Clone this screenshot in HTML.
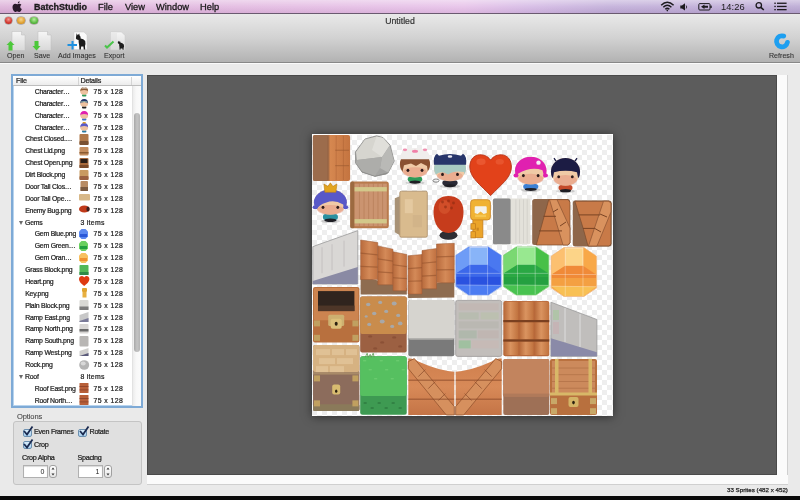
<!DOCTYPE html>
<html><head><meta charset="utf-8">
<style>
*{margin:0;padding:0;box-sizing:border-box}
html,body{width:800px;height:500px;overflow:hidden;background:#eaeaea;font-family:"Liberation Sans",sans-serif;color:#222}
.abs{position:absolute}
#wrap{position:absolute;left:0;top:0;width:800px;height:500px;will-change:transform}
#menubar{left:0;top:0;width:800px;height:14px;background:linear-gradient(rgba(255,255,255,0.45),rgba(255,255,255,0.12) 50%,rgba(60,20,60,0.06)),linear-gradient(to right,#dcb0d8 0%,#e2b8e0 30%,#e6c0e8 58%,#d4b8e4 66%,#c0acd8 76%,#b8a6d2 100%);border-bottom:1px solid #6a5a70}
#menubar span{-webkit-text-stroke:0.3px #1a1a1a}
#menubar span{position:absolute;top:1px;font-size:9.3px;line-height:12px;color:#1a1a1a}
#toolbar{left:0;top:14px;width:800px;height:49px;background:linear-gradient(#e9e9e9,#d2d2d2 50%,#b2b2b2);border-bottom:1px solid #888}
#content{left:0;top:63px;width:800px;height:433px;background:#eaeaea;border-top:1px solid #fafafa}
#black{left:0;top:496px;width:800px;height:4px;background:#0a0a0a}
.light{position:absolute;width:7.6px;height:7.6px;border-radius:50%;box-shadow:0 0 0 0.6px rgba(90,60,60,0.55)}
.tl{position:absolute;font-size:7.1px;line-height:8px;color:#333;-webkit-text-stroke:0.1px #333}
#table{left:11px;top:74px;width:132px;height:334px;background:#fff;border:2px solid #7eaad6;box-shadow:inset 0 0 0 1px #b8d4ee;overflow:hidden}
#thead{left:0;top:0;width:128px;height:10px;background:linear-gradient(#fff,#ececec);border-bottom:1px solid #bdbdbd}
#thead span{position:absolute;top:0;font-size:7.2px;line-height:9px;color:#222;letter-spacing:-0.2px;-webkit-text-stroke:0.22px #222}
.row{position:absolute;left:0;height:12px;width:120px;font-size:6.9px;line-height:12px;color:#1e1e1e;white-space:nowrap;-webkit-text-stroke:0.22px #1e1e1e}
.row .n{letter-spacing:-0.22px}
.row .n{position:absolute;top:0}
.row .d{position:absolute;left:80.4px;top:0;letter-spacing:0.42px}
.row .ic{position:absolute;left:66px;top:0.5px;width:11px;height:11px}
.row .ic svg{display:block}
.tri{position:absolute;width:0;height:0;border-left:2.8px solid transparent;border-right:2.8px solid transparent;border-top:4.6px solid #6a6a6a}
#canvas{left:147px;top:75px;width:630px;height:400px;background:#5c5c5c;border:1px solid #4a4a4a}
#vscroll{left:777px;top:75px;width:11px;height:410px;background:#fbfbfb;border-right:1px solid #d0d0d0}
#hscroll{left:147px;top:475px;width:641px;height:10px;background:#fbfbfb;border-bottom:1px solid #d0d0d0}
#sheet{left:312px;top:134px;width:301px;height:282px;background-color:#fff;overflow:hidden;box-shadow:0 1px 9px rgba(0,0,0,0.5)}
#checker{left:0;top:1px;width:301px;height:281px;filter:blur(0.5px);
 background-image:linear-gradient(45deg,#eeeeee 25%,transparent 25%,transparent 75%,#eeeeee 75%),linear-gradient(45deg,#eeeeee 25%,transparent 25%,transparent 75%,#eeeeee 75%);
 background-size:10px 10px;background-position:0 0,5px 5px}
#options{left:13px;top:421px;width:129px;height:64px;background:#e0e0e0;border:1px solid #c4c4c4;border-radius:3px}
.cb{position:absolute;width:9px;height:8px;border-radius:2px;background:linear-gradient(#d8ecfa,#a8d0f0);border:1px solid #6c90b0}
.cbl{position:absolute;font-size:7.2px;line-height:8px;color:#1e1e1e;letter-spacing:-0.3px;-webkit-text-stroke:0.22px #1e1e1e}
.field{position:absolute;height:13px;background:#fff;border:1px solid #b0b0b0;box-shadow:inset 0 1px 1px rgba(0,0,0,0.15);font-size:7px;line-height:12px;text-align:right;padding-right:2px;color:#222}
.step{position:absolute;width:8px;height:13px;background:linear-gradient(#fff,#e6e6e6);border:1px solid #a0a0a0;border-radius:3px}
</style></head><body><div id="wrap">

<div id="menubar" class="abs">
  <svg class="abs" style="left:11.5px;top:0.8px" width="11" height="12" viewBox="0 0 11 12"><path d="M7.6 0.3c0.1 1-0.6 2.2-1.8 2.3C5.7 1.5 6.5 0.4 7.6 0.3z M5.3 3.2c0.8 0 1.3-0.5 2.1-0.5c0.7 0 1.5 0.3 2 1c-1.8 1-1.5 3.5 0.4 4.2c-0.4 1.1-1.4 3-2.5 3c-0.8 0-1-0.5-2-0.5s-1.300 0.5-2 0.5C2.2 11 0.5 8.6 0.5 6.2C0.5 4 1.8 2.8 3.1 2.8C4 2.8 4.6 3.2 5.3 3.2z" fill="#2a1a2a"/></svg>
  <span style="left:34px;font-weight:bold;font-size:9px">BatchStudio</span>
  <span style="left:98px">File</span>
  <span style="left:125px">View</span>
  <span style="left:156px">Window</span>
  <span style="left:200px">Help</span>
  <span style="left:721px;-webkit-text-stroke:0;letter-spacing:0.1px">14:26</span>
  <svg class="abs" style="left:655px;top:0" width="140" height="14" viewBox="655 0 140 14">
    <path d="M661.2,5.2 Q667.3,-0.8 673.6,5.2" stroke="#1c1a1e" stroke-width="1.5" fill="none"/>
    <path d="M663.3,7.3 Q667.3,3.3 671.4,7.3" stroke="#1c1a1e" stroke-width="1.5" fill="none"/>
    <path d="M665.3,9.3 Q667.3,7.5 669.4,9.3" stroke="#1c1a1e" stroke-width="1.5" fill="none"/>
    <circle cx="667.3" cy="10.6" r="0.8" fill="#1c1a1e"/>
    <path d="M680.3,5.6 H682 L685,3.3 V10.6 L682,8.4 H680.3 Z" fill="#1c1a1e"/>
    <path d="M686.2,5.5 Q687.2,7 686.2,8.5" stroke="#1c1a1e" stroke-width="0.8" fill="none"/>
    <rect x="698.8" y="3.6" width="11.2" height="6.4" rx="1" stroke="#1c1a1e" stroke-width="1" fill="none"/>
    <rect x="710.3" y="5.6" width="1.4" height="2.4" fill="#1c1a1e"/>
    <path d="M701,6.8 L704.5,4.6 V5.8 H708 V7.8 H704.5 V9 Z" fill="#1c1a1e"/>
    <circle cx="758.8" cy="5.3" r="2.7" stroke="#1c1a1e" stroke-width="1.3" fill="none"/>
    <path d="M760.8,7.3 L763.8,10" stroke="#1c1a1e" stroke-width="1.6"/>
    <rect x="774.3" y="2.6" width="1.5" height="1.3" fill="#1c1a1e"/><rect x="777" y="2.6" width="9.6" height="1.3" fill="#1c1a1e"/>
    <rect x="774.3" y="5.8" width="1.5" height="1.3" fill="#1c1a1e"/><rect x="777" y="5.8" width="9.6" height="1.3" fill="#1c1a1e"/>
    <rect x="774.3" y="9" width="1.5" height="1.3" fill="#1c1a1e"/><rect x="777" y="9" width="9.6" height="1.3" fill="#1c1a1e"/>
  </svg>
</div>

<div id="toolbar" class="abs">
  <div class="light" style="left:4.8px;top:2.6px;background:radial-gradient(circle at 50% 35%,#f29a94,#d2352c 60%,#a8241e)"></div>
  <div class="light" style="left:17.4px;top:2.6px;background:radial-gradient(circle at 50% 35%,#f7d890,#e0a030 60%,#b07a20)"></div>
  <div class="light" style="left:30.2px;top:2.6px;background:radial-gradient(circle at 50% 35%,#b8f0a0,#58b840 60%,#3a8a2a)"></div>
  <div class="abs" style="left:0;top:2px;width:800px;text-align:center;font-size:8.7px;line-height:10px;color:#333;-webkit-text-stroke:0.2px #333">Untitled</div>
  
  <svg class="abs" style="left:0;top:0" width="140" height="40" viewBox="0 14 140 40">
    <defs>
      <linearGradient id="doc" x1="0" y1="0" x2="0" y2="1"><stop offset="0" stop-color="#f6f6f6"/><stop offset="1" stop-color="#d8d8d8"/></linearGradient>
    </defs>
    <!-- Open -->
    <path d="M12,31.5 H21.5 L25,35 V50.5 H12 Z" fill="url(#doc)" stroke="#bdbdbd" stroke-width="0.5"/>
    <path d="M21.5,31.5 V35 H25" fill="#d8d8d8" stroke="#bbb" stroke-width="0.5"/>
    <path d="M10.5,41 L14.5,45 H12.5 V50.5 H8.5 V45 H6.5 Z" fill="#4cc83a"/>
    <!-- Save -->
    <path d="M38,31.5 H47.5 L51,35 V50.5 H38 Z" fill="url(#doc)" stroke="#bdbdbd" stroke-width="0.5"/>
    <path d="M47.5,31.5 V35 H51" fill="#d8d8d8" stroke="#bbb" stroke-width="0.5"/>
    <path d="M34.5,41 H38.5 V46 H40.5 L36.5,50.5 L32.5,46 H34.5 Z" fill="#4cc83a"/>
    <!-- Add Images -->
    <path d="M74,32 H84 L87,35 V49.5 H74 Z" fill="#fafafa" stroke="#c8c8c8" stroke-width="0.5"/>
    <path d="M76.6,33.2 L77.8,35.2 L79.2,33.4 L79.6,35.6 Q81,36.4 80.6,38.6 Q83.6,39 85.2,41 Q85.8,43.5 85,46 L85.2,49.5 L83.8,49.5 L83.4,46.6 L81.2,46.6 L80.8,49.5 L79.4,49.5 L79.2,45.5 Q78.4,42 78.6,40 L76.8,39.6 Q75.4,38.6 76,37 Q76.4,35.4 76.6,33.2 Z" fill="#1c1c1c"/>
    <path d="M71.5,41 H73.5 V44 H77 V46 H73.5 V49.5 H71.5 V46 H67.5 V44 H71.5 Z" fill="#1e90e0"/>
    <!-- Export -->
    <path d="M110.5,32 H121.5 L125,35.5 V50 H110.5 Z" fill="url(#doc)" stroke="#c8c8c8" stroke-width="0.5"/>
    <path d="M112,33 V49 M114,33 V49 M116,33 V49" stroke="#dcdcdc" stroke-width="0.8"/>
    <path d="M118.2,40.8 L119,42 L120,41 L120.4,42.6 Q122.6,43 123.8,44.5 Q124.4,46.5 123.6,48 L123.6,49.8 L122.6,49.8 L122.4,48.4 L120.6,48.4 L120.4,49.8 L119.6,49.8 L119.4,46.4 Q119,44.8 119.2,44 L118,43.6 Q117.4,42.6 118.2,40.8 Z" fill="#1c1c1c"/>
    <path d="M105,45.5 L107,47.5 L113.5,41.5" stroke="#4ac44a" stroke-width="2" fill="none"/>
    </svg>
  <svg class="abs" style="left:770px;top:17px" width="24" height="20" viewBox="0 0 24 20">
    <path d="M13.7,5.1 A5.5,5.5 0 1 0 17.4,11.35" stroke="#1e9ff0" stroke-width="4.8" stroke-linecap="round" fill="none"/>
  </svg>
  <div class="tl" style="left:7px;top:38px">Open</div>
  <div class="tl" style="left:34px;top:38px">Save</div>
  <div class="tl" style="left:58px;top:38px">Add Images</div>
  <div class="tl" style="left:104px;top:38px">Export</div>
  <div class="tl" style="left:769px;top:38px">Refresh</div>
</div>

<div id="content" class="abs"></div>
<div id="black" class="abs"></div>

<div id="table" class="abs">
  <div id="thead" class="abs"><span style="left:3px">File</span><span style="left:67.5px">Details</span></div>
  <div class="abs" style="left:65px;top:1px;width:1px;height:8px;background:#d4d4d4"></div>
  <div class="abs" style="left:118px;top:1px;width:1px;height:8px;background:#d4d4d4"></div>
  <div class="abs" style="left:119px;top:10px;width:9px;height:322px;background:linear-gradient(to right,#ececec,#f8f8f8 40%,#fbfbfb);border-left:1px solid #e2e2e2"></div>
  <div class="abs" style="left:121px;top:36.5px;width:5.5px;height:239px;border-radius:3px;background:linear-gradient(to right,#a8a8a8,#c4c4c4 50%,#b4b4b4)"></div>
<div class="row" style="top:9.9px"><span class="n" style="left:21.7px">Character…</span><span class="ic"><svg width="11" height="11" viewBox="0 0 11 11"><rect x="3" y="8.2" width="4.4" height="2.4" rx="1" fill="#2e9a58"/><ellipse cx="5.2" cy="5.4" rx="3.9" ry="3.3" fill="#eec2a0"/><path d="M1.3,5.6 Q1.1,1.2 5.2,1.1 Q9.3,1.2 9.1,5.6 L8.2,4.4 Q5.2,3.4 2.2,4.4 Z" fill="#8a5a34"/><path d="M2,2.6 Q5.2,-0.4 8.4,2.6 Z" fill="#e8e0d8"/></svg></span><span class="d">75 x 128</span></div>
<div class="row" style="top:21.77px"><span class="n" style="left:21.7px">Character…</span><span class="ic"><svg width="11" height="11" viewBox="0 0 11 11"><rect x="3" y="8.2" width="4.4" height="2.4" rx="1" fill="#222"/><ellipse cx="5.2" cy="5.4" rx="3.9" ry="3.3" fill="#eec2a0"/><path d="M1.3,5.6 Q1.1,1.2 5.2,1.1 Q9.3,1.2 9.1,5.6 L8.2,4.4 Q5.2,3.4 2.2,4.4 Z" fill="#24346a"/><path d="M1.6,3.6 Q5.2,2.2 8.8,3.6 L8.6,4.6 Q5.2,3.6 1.8,4.6 Z" fill="#90b0a8"/></svg></span><span class="d">75 x 128</span></div>
<div class="row" style="top:33.65px"><span class="n" style="left:21.7px">Character…</span><span class="ic"><svg width="11" height="11" viewBox="0 0 11 11"><rect x="3" y="8.2" width="4.4" height="2.4" rx="1" fill="#3c70c8"/><ellipse cx="5.2" cy="5.4" rx="3.9" ry="3.3" fill="#eec2a0"/><path d="M1.3,5.6 Q1.1,1.2 5.2,1.1 Q9.3,1.2 9.1,5.6 L8.2,4.4 Q5.2,3.4 2.2,4.4 Z" fill="#e020b0"/></svg></span><span class="d">75 x 128</span></div>
<div class="row" style="top:45.52px"><span class="n" style="left:21.7px">Character…</span><span class="ic"><svg width="11" height="11" viewBox="0 0 11 11"><rect x="3" y="8.2" width="4.4" height="2.4" rx="1" fill="#2a7aa0"/><ellipse cx="5.2" cy="5.4" rx="3.9" ry="3.3" fill="#eec2a0"/><path d="M1.3,5.6 Q1.1,1.2 5.2,1.1 Q9.3,1.2 9.1,5.6 L8.2,4.4 Q5.2,3.4 2.2,4.4 Z" fill="#5a5ac8"/><rect x="3.7" y="0" width="3" height="1.4" rx="0" fill="#e0a020"/></svg></span><span class="d">75 x 128</span></div>
<div class="row" style="top:57.4px"><span class="n" style="left:12.2px">Chest Closed.…</span><span class="ic"><svg width="11" height="11" viewBox="0 0 11 11"><rect x="0.5" y="0" width="9" height="11" rx="1" fill="#b07848"/><rect x="0.5" y="7" width="9" height="4" rx="1" fill="#7a5030"/></svg></span><span class="d">75 x 128</span></div>
<div class="row" style="top:69.28px"><span class="n" style="left:12.2px">Chest Lid.png</span><span class="ic"><svg width="11" height="11" viewBox="0 0 11 11"><rect x="0.5" y="1" width="9" height="8.5" rx="1" fill="#c48c5c"/><rect x="0.5" y="6" width="9" height="1.5" rx="0" fill="#8a5a30"/></svg></span><span class="d">75 x 128</span></div>
<div class="row" style="top:81.15px"><span class="n" style="left:12.2px">Chest Open.png</span><span class="ic"><svg width="11" height="11" viewBox="0 0 11 11"><rect x="0.5" y="0" width="9" height="10" rx="1" fill="#a86a3c"/><rect x="1.5" y="1" width="7" height="4" rx="0" fill="#2a1e18"/><rect x="0.5" y="7" width="9" height="3" rx="0" fill="#7a4a2a"/></svg></span><span class="d">75 x 128</span></div>
<div class="row" style="top:93.03px"><span class="n" style="left:12.2px">Dirt Block.png</span><span class="ic"><svg width="11" height="11" viewBox="0 0 11 11"><rect x="0.5" y="0" width="9" height="10" rx="1" fill="#c89a60"/><rect x="0.5" y="6" width="9" height="4" rx="1" fill="#9a6040"/></svg></span><span class="d">75 x 128</span></div>
<div class="row" style="top:104.9px"><span class="n" style="left:12.2px">Door Tall Clos…</span><span class="ic"><svg width="11" height="11" viewBox="0 0 11 11"><rect x="1.5" y="0" width="7.5" height="10" rx="1" fill="#b88c64"/><rect x="1.5" y="6" width="7.5" height="4" rx="0" fill="#7a5a40"/></svg></span><span class="d">75 x 128</span></div>
<div class="row" style="top:116.78px"><span class="n" style="left:12.2px">Door Tall Ope…</span><span class="ic"><svg width="11" height="11" viewBox="0 0 11 11"><rect x="0" y="1" width="11" height="6.5" rx="1" fill="#d8b888"/></svg></span><span class="d">75 x 128</span></div>
<div class="row" style="top:128.65px"><span class="n" style="left:12.2px">Enemy Bug.png</span><span class="ic"><svg width="11" height="11" viewBox="0 0 11 11"><ellipse cx="5.3" cy="4" rx="5.3" ry="3.6" fill="#c03a1a"/><ellipse cx="9" cy="4" rx="1.6" ry="2.6" fill="#3a2020"/></svg></span><span class="d">75 x 128</span></div>
<div class="row" style="top:140.53px"><span class="tri" style="left:5.6px;top:4px"></span><span class="n" style="left:12px">Gems</span><span class="d" style="left:67.5px;letter-spacing:0.28px">3 items</span></div>
<div class="row" style="top:152.4px"><span class="n" style="left:21.7px">Gem Blue.png</span><span class="ic"><svg width="11" height="11" viewBox="0 0 11 11"><polygon points="2.5,0 6.5,0 9,2.5 9,7.5 6.5,10 2.5,10 0,7.5 0,2.5" fill="#5a88f0"/><rect x="1" y="5" width="7" height="3" rx="0" fill="#2a58d8"/></svg></span><span class="d">75 x 128</span></div>
<div class="row" style="top:164.28px"><span class="n" style="left:21.7px">Gem Green…</span><span class="ic"><svg width="11" height="11" viewBox="0 0 11 11"><polygon points="2.5,0 6.5,0 9,2.5 9,7.5 6.5,10 2.5,10 0,7.5 0,2.5" fill="#6ad060"/><rect x="1" y="5" width="7" height="3" rx="0" fill="#22a040"/></svg></span><span class="d">75 x 128</span></div>
<div class="row" style="top:176.15px"><span class="n" style="left:21.7px">Gem Oran…</span><span class="ic"><svg width="11" height="11" viewBox="0 0 11 11"><polygon points="2.5,0 6.5,0 9,2.5 9,7.5 6.5,10 2.5,10 0,7.5 0,2.5" fill="#f8c060"/><rect x="1" y="5" width="7" height="3" rx="0" fill="#f09030"/></svg></span><span class="d">75 x 128</span></div>
<div class="row" style="top:188.03px"><span class="n" style="left:12.2px">Grass Block.png</span><span class="ic"><svg width="11" height="11" viewBox="0 0 11 11"><rect x="0.5" y="0" width="9" height="10" rx="0.8" fill="#52b858"/><rect x="0.5" y="7" width="9" height="3" rx="0" fill="#2e8a48"/></svg></span><span class="d">75 x 128</span></div>
<div class="row" style="top:199.9px"><span class="n" style="left:12.2px">Heart.png</span><span class="ic"><svg width="11" height="11" viewBox="0 0 11 11"><path d="M5.2,10 C3,8 0,6 0,3 C0,1 1.5,0 3,0 C4,0 4.8,0.8 5.2,1.6 C5.6,0.8 6.4,0 7.4,0 C9,0 10.4,1 10.4,3 C10.4,6 7.4,8 5.2,10 Z" fill="#de3a12"/></svg></span><span class="d">75 x 128</span></div>
<div class="row" style="top:211.78px"><span class="n" style="left:12.2px">Key.png</span><span class="ic"><svg width="11" height="11" viewBox="0 0 11 11"><rect x="3" y="0" width="5" height="4" rx="1" fill="#e0a430"/><rect x="3.5" y="4" width="4" height="5.5" rx="0" fill="#e8b040"/></svg></span><span class="d">75 x 128</span></div>
<div class="row" style="top:223.65px"><span class="n" style="left:12.2px">Plain Block.png</span><span class="ic"><svg width="11" height="11" viewBox="0 0 11 11"><rect x="0.5" y="0" width="9" height="10" rx="1" fill="#d8d8d4"/><rect x="0.5" y="6.5" width="9" height="3.5" rx="0" fill="#7a7a7a"/></svg></span><span class="d">75 x 128</span></div>
<div class="row" style="top:235.53px"><span class="n" style="left:12.2px">Ramp East.png</span><span class="ic"><svg width="11" height="11" viewBox="0 0 11 11"><polygon points="0.5,3 9.5,0 9.5,10 0.5,10" fill="#c8c8c8"/><polygon points="0.5,9 9.5,6 9.5,10 0.5,10" fill="#7a7a98"/></svg></span><span class="d">75 x 128</span></div>
<div class="row" style="top:247.4px"><span class="n" style="left:12.2px">Ramp North.png</span><span class="ic"><svg width="11" height="11" viewBox="0 0 11 11"><rect x="0.5" y="0" width="9" height="9.5" rx="1" fill="#d8d6d4"/><rect x="0.5" y="5" width="9" height="2.5" rx="0" fill="#6a6a6a"/></svg></span><span class="d">75 x 128</span></div>
<div class="row" style="top:259.27px"><span class="n" style="left:12.2px">Ramp South.png</span><span class="ic"><svg width="11" height="11" viewBox="0 0 11 11"><rect x="0.5" y="0" width="9" height="10.5" rx="1" fill="#b8b6b4"/></svg></span><span class="d">75 x 128</span></div>
<div class="row" style="top:271.15px"><span class="n" style="left:12.2px">Ramp West.png</span><span class="ic"><svg width="11" height="11" viewBox="0 0 11 11"><polygon points="0.5,3 9.5,0 9.5,8 0.5,8" fill="#d0cfcd"/><polygon points="0.5,8 9.5,5 9.5,8" fill="#5a5a7a"/></svg></span><span class="d">75 x 128</span></div>
<div class="row" style="top:283.02px"><span class="n" style="left:12.2px">Rock.png</span><span class="ic"><svg width="11" height="11" viewBox="0 0 11 11"><ellipse cx="5.2" cy="5" rx="5" ry="4.8" fill="#b4b4b4"/><ellipse cx="4.2" cy="3.5" rx="2.5" ry="2" fill="#d8d8d8"/></svg></span><span class="d">75 x 128</span></div>
<div class="row" style="top:294.9px"><span class="tri" style="left:5.6px;top:4px"></span><span class="n" style="left:12px">Roof</span><span class="d" style="left:67.5px;letter-spacing:0.28px">8 items</span></div>
<div class="row" style="top:306.77px"><span class="n" style="left:21.7px">Roof East.png</span><span class="ic"><svg width="11" height="11" viewBox="0 0 11 11"><rect x="0.5" y="0" width="9" height="10" rx="0.5" fill="#b8603a"/><rect x="0.5" y="3" width="9" height="0.8" rx="0" fill="#8a4028"/><rect x="0.5" y="6.5" width="9" height="0.8" rx="0" fill="#8a4028"/></svg></span><span class="d">75 x 128</span></div>
<div class="row" style="top:318.65px"><span class="n" style="left:21.7px">Roof North…</span><span class="ic"><svg width="11" height="11" viewBox="0 0 11 11"><rect x="0.5" y="0" width="9" height="10" rx="0.5" fill="#b8603a"/><rect x="0.5" y="3" width="9" height="0.8" rx="0" fill="#8a4028"/><rect x="0.5" y="6.5" width="9" height="0.8" rx="0" fill="#8a4028"/></svg></span><span class="d">75 x 128</span></div>
</div>

<div id="canvas" class="abs"></div>
<div id="vscroll" class="abs"></div>
<div id="hscroll" class="abs"></div>
<div id="sheet" class="abs"><div id="checker" class="abs"></div><svg width="301" height="282" viewBox="0 0 301 282" style="position:absolute;left:0;top:0"><defs><linearGradient id="wr" x1="0" y1="0" x2="1" y2="0"><stop offset="0" stop-color="#c87840"/><stop offset="0.4" stop-color="#d88a52"/><stop offset="1" stop-color="#c47440"/></linearGradient></defs><rect x="0.9" y="0.9" width="37.2" height="46.1" rx="2" fill="url(#wr)" /><rect x="0.9" y="0.9" width="15.62" height="46.1" rx="1.8" fill="#9c6c4c" /><rect x="15.52" y="0.9" width="2" height="46.1" rx="0" fill="#8a5a3c" opacity="0.5"/><rect x="23.72" y="1.9" width="0.9" height="44.1" rx="0" fill="#a45c30" opacity="0.45"/><rect x="30.91" y="1.9" width="0.9" height="44.1" rx="0" fill="#a45c30" opacity="0.45"/><rect x="23.22" y="15.67" width="13.88" height="1.2" rx="0" fill="#9a5a30" opacity="0.55"/><rect x="23.22" y="31.03" width="13.88" height="1.2" rx="0" fill="#9a5a30" opacity="0.55"/><polygon points="53,5 64.5,1.8 71,3.6 78,11 82.2,27 76,39 63,42.4 50,38 43.6,29 43.4,18" fill="#a4a4a2" stroke="#8a8a88" stroke-width="0.8"/><polygon points="53,5.6 64.5,2.4 71,4 77.6,11.4 70,23 45,26 44,18" fill="#d6d5cf" /><polygon points="64.5,2.4 71,4 77.6,11.4 70,23 60,16" fill="#e0dfda" /><polygon points="70,23 77.6,11.4 82,27 76,38.6 68,34" fill="#b9b9b6" /><polygon points="45,26 70,23 68,34 63,42 50,37.6 44,29" fill="#adadaa" /><polygon points="44,29 50,37.6 63,42 76,38.6 74,40.5 63,42.4 50,38.4" fill="#8e8e8c" /><ellipse cx="103" cy="48.8" rx="9.6" ry="2" fill="rgba(0,0,0,0.15)" /><rect x="95.8" y="42.44" width="14.4" height="5.4" rx="3" fill="#2e9a58" /><ellipse cx="103" cy="48.2" rx="5.76" ry="1.62" fill="#1e1e24" /><clipPath id="ch1"><ellipse cx="103" cy="30.2" rx="15.04" ry="13.32"/></clipPath><ellipse cx="103" cy="30.2" rx="15.04" ry="13.32" fill="#f0caa6" /><ellipse cx="103" cy="38.19" rx="12.03" ry="5.06" fill="#e4907a" opacity="0.5"/><g clip-path="url(#ch1)"><path d="M86,16.88 H120 V39.92 L116,39.2 L115,32 L109,29.12 L104,32 L99,29.48 L92,31.28 L90,39.92 L86,39.92 Z" fill="#8a5030"/></g><path d="M88,25.16 Q88,14 103,14 Q118,14 118,25.16 Z" fill="#f0eeec" /><ellipse cx="103" cy="17.24" rx="3" ry="1.5" fill="#f080a8" /><ellipse cx="93" cy="15.8" rx="2.2" ry="1.4" fill="#f090b0" /><ellipse cx="113" cy="15.8" rx="2.2" ry="1.4" fill="#f090b0" /><ellipse cx="95.96" cy="36.32" rx="1.4" ry="1.6" fill="#2a1a1a" /><ellipse cx="110.04" cy="36.32" rx="1.4" ry="1.6" fill="#2a1a1a" /><ellipse cx="138" cy="52.3" rx="10.2" ry="2" fill="rgba(0,0,0,0.15)" /><rect x="130.35" y="46.26" width="15.3" height="5.17" rx="3" fill="#2a2a36" /><ellipse cx="138" cy="51.77" rx="6.12" ry="1.55" fill="#1e1e24" /><clipPath id="ch2"><ellipse cx="138" cy="34.52" rx="15.98" ry="12.77"/></clipPath><ellipse cx="138" cy="34.52" rx="15.98" ry="12.77" fill="#f0caa6" /><ellipse cx="138" cy="42.18" rx="12.78" ry="4.85" fill="#e4907a" opacity="0.5"/><g clip-path="url(#ch2)"><path d="M120,21.76 H156 V46.6 L153,45.91 L152,37.98 Q142,36.25 136,40.39 Q129,36.25 124,40.39 L123,46.6 L120,46.6 Z" fill="#a8cac2"/></g><path d="M122,30.73 Q121,21.76 125,19.69 L127,21.76 Q138,18 149,21.76 L151,19.69 Q155,21.76 154,30.73 Z" fill="#27356a" /><ellipse cx="138" cy="22.45" rx="2.3" ry="1.3" fill="#e8e8f0" /><ellipse cx="124" cy="46.6" rx="3" ry="1.6" stroke="#555" stroke-width="0.7" fill="none"/><ellipse cx="130.52" cy="40.39" rx="1.4" ry="1.6" fill="#2a1a1a" /><ellipse cx="145.48" cy="40.39" rx="1.4" ry="1.6" fill="#2a1a1a" /><path d="M178.6,26.1 C175.27,21.62 171.94,20.8 167.78,20.8 C161.96,20.8 157.8,25.7 157.8,33.04 C157.8,43.65 168.62,50.99 178.6,61.6 C188.58,50.99 199.4,43.65 199.4,33.04 C199.4,25.7 195.24,20.8 189.42,20.8 C185.26,20.8 181.93,21.62 178.6,26.1 Z" fill="#e2421a" stroke="#b4341a" stroke-width="0.9"/><ellipse cx="169.03" cy="27.74" rx="4.58" ry="3.26" fill="#f06a44" opacity="0.55"/><ellipse cx="187.75" cy="27.74" rx="4.16" ry="2.86" fill="#f06a44" opacity="0.45"/><ellipse cx="218.75" cy="56" rx="10.05" ry="2" fill="rgba(0,0,0,0.15)" /><rect x="211.21" y="49.89" width="15.08" height="5.22" rx="3" fill="#3c80d4" /><ellipse cx="218.75" cy="55.46" rx="6.03" ry="1.57" fill="#1e1e24" /><clipPath id="ch3"><ellipse cx="218.75" cy="36.67" rx="15.74" ry="13.92"/></clipPath><ellipse cx="218.75" cy="36.67" rx="15.74" ry="13.92" fill="#f0caa6" /><ellipse cx="218.75" cy="45.02" rx="12.6" ry="5.29" fill="#e4907a" opacity="0.5"/><g clip-path="url(#ch3)"><path d="M201,22.75 H236.5 V43.98 L232.5,43.98 L230.5,36.32 Q218.75,32.14 206,39.8 L204,42.58 L201,42.58 Z" fill="#e020b0"/></g><ellipse cx="204" cy="41.54" rx="2.5" ry="2" fill="#e020b0" /><ellipse cx="233.5" cy="41.54" rx="2.5" ry="2" fill="#e020b0" /><ellipse cx="226.5" cy="28.66" rx="2.2" ry="2.2" fill="#f4eef4" /><ellipse cx="211.38" cy="41.54" rx="1.4" ry="1.6" fill="#2a1a1a" /><ellipse cx="226.12" cy="41.54" rx="1.4" ry="1.6" fill="#2a1a1a" /><ellipse cx="253.5" cy="57.2" rx="9.3" ry="2" fill="rgba(0,0,0,0.15)" /><rect x="246.53" y="51.09" width="13.95" height="5.22" rx="3" fill="#c44a2a" /><ellipse cx="253.5" cy="56.66" rx="5.58" ry="1.57" fill="#1e1e24" /><clipPath id="ch4"><ellipse cx="253.5" cy="37.87" rx="14.57" ry="13.92"/></clipPath><ellipse cx="253.5" cy="37.87" rx="14.57" ry="13.92" fill="#f0caa6" /><ellipse cx="253.5" cy="46.22" rx="11.66" ry="5.29" fill="#e4907a" opacity="0.5"/><g clip-path="url(#ch4)"><path d="M237,23.95 H270 V43.78 L266,43.78 L265,38.22 Q253.5,35.43 242,38.22 L241,43.78 L237,43.78 Z" fill="#1c1c44"/></g><path d="M244,27.08 l-2,-3 M263,27.08 l2,-3" stroke="#1c1c44" stroke-width="1.3"/><ellipse cx="246.68" cy="42.74" rx="1.4" ry="1.6" fill="#2a1a1a" /><ellipse cx="260.32" cy="42.74" rx="1.4" ry="1.6" fill="#2a1a1a" /><ellipse cx="18.4" cy="87.1" rx="10.08" ry="2" fill="rgba(0,0,0,0.15)" /><rect x="10.84" y="80.01" width="15.12" height="5.92" rx="3" fill="#2a90a0" /><ellipse cx="18.4" cy="86.33" rx="6.05" ry="1.78" fill="#1e1e24" /><clipPath id="ch5"><ellipse cx="18.4" cy="68.16" rx="16.46" ry="12.64"/></clipPath><ellipse cx="18.4" cy="68.16" rx="16.46" ry="12.64" fill="#f0caa6" /><ellipse cx="18.4" cy="75.74" rx="13.17" ry="4.8" fill="#e4907a" opacity="0.5"/><g clip-path="url(#ch5)"><path d="M0.6,55.52 H36.2 V75.66 L32.2,75.66 L31.2,70.53 Q22.4,65.39 14.4,68.55 Q6.6,70.92 4.6,75.66 L0.6,75.66 Z" fill="#5858c8"/></g><ellipse cx="3.1" cy="73.29" rx="2.5" ry="2" fill="#5858c8" /><ellipse cx="33.7" cy="73.29" rx="2.5" ry="2" fill="#5858c8" /><path d="M12.9,58.28 L11.9,49.99 L15.9,52.36 L18.4,48.8 L20.9,52.36 L24.9,49.99 L23.9,58.28 Z" fill="#e2a41e" stroke="#b87a14" stroke-width="0.6"/><ellipse cx="11.01" cy="73.29" rx="1.4" ry="1.6" fill="#2a1a1a" /><ellipse cx="25.79" cy="73.29" rx="1.4" ry="1.6" fill="#2a1a1a" /><rect x="38.3" y="47.6" width="38.5" height="46.6" rx="2.5" fill="#b87a4c" /><rect x="42.3" y="49.6" width="32.5" height="42.6" rx="0" fill="#cb9470" /><rect x="46.94" y="49.6" width="0.9" height="42.6" rx="0" fill="#b07850" opacity="0.6"/><rect x="51.59" y="49.6" width="0.9" height="42.6" rx="0" fill="#b07850" opacity="0.6"/><rect x="56.23" y="49.6" width="0.9" height="42.6" rx="0" fill="#b07850" opacity="0.6"/><rect x="60.87" y="49.6" width="0.9" height="42.6" rx="0" fill="#b07850" opacity="0.6"/><rect x="65.51" y="49.6" width="0.9" height="42.6" rx="0" fill="#b07850" opacity="0.6"/><rect x="70.16" y="49.6" width="0.9" height="42.6" rx="0" fill="#b07850" opacity="0.6"/><rect x="42.3" y="53.1" width="32.5" height="4.3" rx="0" fill="#d3c88a" /><rect x="42.3" y="85.1" width="32.5" height="4.3" rx="0" fill="#d3c88a" /><rect x="38.3" y="47.6" width="4" height="46.6" rx="1.5" fill="#9c6a40" /><polygon points="82.8,64.2 87.8,62.2 87.8,101.2 82.8,98.2" fill="#a89276" /><rect x="87.8" y="57.2" width="27.5" height="46" rx="1.5" fill="#d9bb8e" stroke="#a88a64" stroke-width="0.8"/><rect x="92.8" y="65.2" width="8" height="14" rx="0" fill="#e4c9a0" /><rect x="100.8" y="81.2" width="9" height="12" rx="0" fill="#cfb088" opacity="0.7"/><ellipse cx="136.5" cy="101.2" rx="9" ry="4.6" fill="#2e2e34" /><path d="M121.5,78 C121.5,66 128.5,62 136.5,62 C144.5,62 151.5,66 151.5,78 C151.5,90 145.5,99 136.5,99 C127.5,99 121.5,90 121.5,78 Z" fill="#c63c1c" /><ellipse cx="132.5" cy="73" rx="6" ry="7" fill="#dc6036" opacity="0.5"/><ellipse cx="130.5" cy="68" rx="1.4" ry="1.4" fill="#8a2a10" opacity="0.6"/><ellipse cx="136.5" cy="67" rx="1.4" ry="1.4" fill="#8a2a10" opacity="0.6"/><ellipse cx="141.5" cy="69" rx="1.4" ry="1.4" fill="#8a2a10" opacity="0.6"/><ellipse cx="133.5" cy="73" rx="1.4" ry="1.4" fill="#8a2a10" opacity="0.6"/><ellipse cx="139.5" cy="74" rx="1.4" ry="1.4" fill="#8a2a10" opacity="0.6"/><rect x="160.9" y="84.7" width="10" height="19" rx="0" fill="#eba42a" stroke="#c07a1c" stroke-width="0.7"/><rect x="158.9" y="89.7" width="4.5" height="5.5" rx="0" fill="#eba42a" stroke="#c07a1c" stroke-width="0.7"/><rect x="158.9" y="97.7" width="4.5" height="6.2" rx="0" fill="#eba42a" stroke="#c07a1c" stroke-width="0.7"/><rect x="164.6" y="93.7" width="2.2" height="3" rx="0" fill="#c07a1c" opacity="0.7"/><rect x="158.6" y="65.7" width="19.8" height="20.2" rx="3" fill="#f0b232" stroke="#c8801e" stroke-width="0.8"/><path d="M162.7,73.2 Q162.7,72.3 163.6,72.3 H173.8 Q174.7,72.3 174.7,73.2 V78.9 L171.6,80 L168.6,77.5 L165.6,80 L162.7,78.9 Z" fill="#f4f2ea" /><rect x="163.1" y="80.7" width="11" height="2.5" rx="0" fill="#f8d060" opacity="0.7"/><rect x="181" y="64.4" width="37.5" height="45.8" rx="2" fill="#e3e1da" /><rect x="181" y="64.4" width="17.62" height="45.8" rx="1.5" fill="#8a8a8a" /><rect x="203.5" y="65.4" width="0.8" height="43.8" rx="0" fill="#c8c6c0" opacity="0.7"/><rect x="207.25" y="65.4" width="0.8" height="43.8" rx="0" fill="#c8c6c0" opacity="0.7"/><rect x="211" y="65.4" width="0.8" height="43.8" rx="0" fill="#c8c6c0" opacity="0.7"/><rect x="214.75" y="65.4" width="0.8" height="43.8" rx="0" fill="#c8c6c0" opacity="0.7"/><rect x="220.2" y="65" width="37.8" height="46" rx="2.5" fill="#8e664a" /><polygon points="236.75,65.6 256,65.6 258,68 258,109 255.5,111 224.25,111" fill="#c87a48" stroke="#7a4a2c" stroke-width="0.7"/><polygon points="237.5,65.6 245,65.6 258,94 258,109 255.5,111 251,111" fill="#d9925e" stroke="#8a5230" stroke-width="0.7"/><path d="M231.5,82.3 H244 M227,96.9 H250 M241,78 L246,75 M248,92 L254,88" stroke="#7a4424" stroke-width="1" fill="none"/><rect x="260.8" y="66.5" width="38.8" height="46" rx="2.5" fill="#8e664a" /><polygon points="262.9,67.2 297,67.2 299,69.5 299,110 297,112 276,112 271.5,95.5" fill="#c87a48" stroke="#7a4a2c" stroke-width="0.7"/><polygon points="291.5,67.2 297,67.2 299,69.5 299,78 285,112 276.5,112" fill="#d9925e" stroke="#8a5230" stroke-width="0.7"/><path d="M266.5,80.9 H288 M271,94.4 H282 M288,80 L295,83 M282,94 L289,98" stroke="#7a4424" stroke-width="1" fill="none"/><polygon points="0.8,112.6 45.8,96.6 45.8,150 0.8,150" fill="#d9d7d5" stroke="#9a9a9a" stroke-width="0.8"/><polygon points="0.8,147 45.8,133 45.8,150 0.8,150" fill="#8a8aa4" /><line x1="10" y1="113.24" x2="10" y2="139.24" stroke="#c4c0c0" stroke-width="1"/><line x1="20" y1="110.24" x2="20" y2="136.24" stroke="#c4c0c0" stroke-width="1"/><line x1="32" y1="106.64" x2="32" y2="132.64" stroke="#c4c0c0" stroke-width="1"/><defs><linearGradient id="pil" x1="0" y1="0" x2="1" y2="0"><stop offset="0" stop-color="#b86a3c"/><stop offset="0.5" stop-color="#d48a58"/><stop offset="1" stop-color="#c07040"/></linearGradient></defs><polygon points="48.6,142 94.8,154 94.8,160.4 48.6,160.4" fill="#8e6c50" /><polygon points="48.6,106 65.8,108.6 65.8,145.5 48.6,145.5" fill="url(#pil)" stroke="#9c5a34" stroke-width="0.5"/><polygon points="48.6,118.57 65.8,120.3 65.8,121.5 48.6,119.77" fill="#8e4e2a" opacity="0.55"/><polygon points="48.6,131.73 65.8,132.6 65.8,133.8 48.6,132.93" fill="#8e4e2a" opacity="0.55"/><polygon points="65.8,111.9 81,115.2 81,150.8 65.8,150.8" fill="url(#pil)" stroke="#9c5a34" stroke-width="0.5"/><polygon points="65.8,124.27 81,126.47 81,127.67 65.8,125.47" fill="#8e4e2a" opacity="0.55"/><polygon points="65.8,137.23 81,138.33 81,139.53 65.8,138.43" fill="#8e4e2a" opacity="0.55"/><polygon points="81,117.8 94.8,120.5 94.8,156.7 81,156.7" fill="url(#pil)" stroke="#9c5a34" stroke-width="0.5"/><polygon points="81,130.17 94.8,131.97 94.8,133.17 81,131.37" fill="#8e4e2a" opacity="0.55"/><polygon points="81,143.13 94.8,144.03 94.8,145.23 81,144.33" fill="#8e4e2a" opacity="0.55"/><polygon points="96.1,156 142.3,145 142.3,163.5 96.1,164" fill="#8e6c50" /><polygon points="96.1,121.8 110,120.5 110,160 96.1,160" fill="url(#pil)" stroke="#9c5a34" stroke-width="0.5"/><polygon points="96.1,133.93 110,133.07 110,134.27 96.1,135.13" fill="#8e4e2a" opacity="0.55"/><polygon points="96.1,146.67 110,146.23 110,147.43 96.1,147.87" fill="#8e4e2a" opacity="0.55"/><polygon points="110,116.5 124.5,114.5 124.5,154.8 110,154.8" fill="url(#pil)" stroke="#9c5a34" stroke-width="0.5"/><polygon points="110,128.67 124.5,127.33 124.5,128.53 110,129.87" fill="#8e4e2a" opacity="0.55"/><polygon points="110,141.43 124.5,140.77 124.5,141.97 110,142.63" fill="#8e4e2a" opacity="0.55"/><polygon points="124.5,110 142.3,109.3 142.3,148.8 124.5,148.8" fill="url(#pil)" stroke="#9c5a34" stroke-width="0.5"/><polygon points="124.5,122.33 142.3,121.87 142.3,123.07 124.5,123.53" fill="#8e4e2a" opacity="0.55"/><polygon points="124.5,135.27 142.3,135.03 142.3,136.23 124.5,136.47" fill="#8e4e2a" opacity="0.55"/><polygon points="156.51,112.9 176.49,112.9 189.2,121.32 189.2,152.58 176.49,161 156.51,161 143.8,152.58 143.8,121.32" fill="#4a78f0" stroke="#9ab4f0" stroke-width="0.9"/><polygon points="156.51,113.4 157.87,113.4 157.87,130.7 144.3,139.36 144.3,121.32" fill="#6e9cf6" /><polygon points="175.58,113.4 176.49,113.4 188.7,121.32 188.7,139.36 175.58,130.7" fill="#4a78f0" /><rect x="157.87" y="113.4" width="17.71" height="17.8" rx="0" fill="#88b4f8" stroke="rgba(255,255,255,0.55)" stroke-width="0.8"/><polygon points="144.3,139.36 157.87,130.7 175.58,130.7 188.7,139.36 188.7,142.72 144.3,142.72" fill="#3c68ea" /><polygon points="144.3,142.72 188.7,142.72 188.7,151.38 144.3,150.9" fill="#2a52e0" /><polygon points="144.3,150.9 188.7,151.38 176.49,160.5 156.51,160.5" fill="#4c7cf2" /><path d="M144.3,150.9 L188.7,151.38 M157.87,130.7 V160.5 M175.58,130.7 V160.5 M144.3,139.36 H188.7" stroke="rgba(255,255,255,0.4)" stroke-width="0.8" fill="none"/><polygon points="204.11,112.9 224.09,112.9 236.8,121.32 236.8,152.58 224.09,161 204.11,161 191.4,152.58 191.4,121.32" fill="#48c048" stroke="#98d890" stroke-width="0.9"/><polygon points="204.11,113.4 205.47,113.4 205.47,130.7 191.9,139.36 191.9,121.32" fill="#7ad872" /><polygon points="223.18,113.4 224.09,113.4 236.3,121.32 236.3,139.36 223.18,130.7" fill="#48c048" /><rect x="205.47" y="113.4" width="17.71" height="17.8" rx="0" fill="#98e890" stroke="rgba(255,255,255,0.55)" stroke-width="0.8"/><polygon points="191.9,139.36 205.47,130.7 223.18,130.7 236.3,139.36 236.3,142.72 191.9,142.72" fill="#2aa844" /><polygon points="191.9,142.72 236.3,142.72 236.3,151.38 191.9,150.9" fill="#24a040" /><polygon points="191.9,150.9 236.3,151.38 224.09,160.5 204.11,160.5" fill="#48c250" /><path d="M191.9,150.9 L236.3,151.38 M205.47,130.7 V160.5 M223.18,130.7 V160.5 M191.9,139.36 H236.3" stroke="rgba(255,255,255,0.4)" stroke-width="0.8" fill="none"/><polygon points="251.91,113.6 271.89,113.6 284.6,122.16 284.6,153.94 271.89,162.5 251.91,162.5 239.2,153.94 239.2,122.16" fill="#f8a848" stroke="#f0c090" stroke-width="0.9"/><polygon points="251.91,114.1 253.27,114.1 253.27,131.69 239.7,140.5 239.7,122.16" fill="#fcc070" /><polygon points="270.98,114.1 271.89,114.1 284.1,122.16 284.1,140.5 270.98,131.69" fill="#f8a848" /><rect x="253.27" y="114.1" width="17.71" height="18.09" rx="0" fill="#fcd488" stroke="rgba(255,255,255,0.55)" stroke-width="0.8"/><polygon points="239.7,140.5 253.27,131.69 270.98,131.69 284.1,140.5 284.1,143.92 239.7,143.92" fill="#f08a38" /><polygon points="239.7,143.92 284.1,143.92 284.1,152.72 239.7,152.23" fill="#f4a042" /><polygon points="239.7,152.23 284.1,152.72 271.89,162 251.91,162" fill="#f8c054" /><path d="M239.7,152.23 L284.1,152.72 M253.27,131.69 V162 M270.98,131.69 V162 M239.7,140.5 H284.1" stroke="rgba(255,255,255,0.4)" stroke-width="0.8" fill="none"/><rect x="1" y="153.1" width="46.4" height="55.5" rx="2" fill="#b8703e" /><rect x="2" y="154.1" width="44.4" height="32.19" rx="1.5" fill="#cc8450" /><rect x="6" y="157.1" width="36.4" height="19.98" rx="0" fill="#30241e" /><rect x="6" y="171.53" width="36.4" height="5.55" rx="0" fill="#4e3628" /><rect x="2" y="186.4" width="6" height="6" rx="0" fill="#c0a060" /><rect x="40.4" y="186.4" width="6" height="6" rx="0" fill="#c0a060" /><rect x="2" y="200.83" width="6" height="6" rx="0" fill="#c0a060" /><rect x="40.4" y="200.83" width="6" height="6" rx="0" fill="#c0a060" /><rect x="16.2" y="180.85" width="16" height="11.1" rx="1.5" fill="#cdb070" /><rect x="18.7" y="184.74" width="11" height="10" rx="2" fill="#dcc07a" /><ellipse cx="24.2" cy="189.73" rx="1.5" ry="2" fill="#2a2010" /><rect x="48.2" y="162.4" width="46.5" height="56" rx="2" fill="#9c6042" /><rect x="48.2" y="162.4" width="46.5" height="37.52" rx="2" fill="#c98c4c" /><ellipse cx="56.2" cy="170.4" rx="2.2" ry="1.76" fill="#a8a8a8" /><ellipse cx="68.2" cy="168.4" rx="2" ry="1.6" fill="#a8a8a8" /><ellipse cx="82.2" cy="169.4" rx="2.5" ry="2" fill="#a8a8a8" /><ellipse cx="62.2" cy="179.4" rx="2.2" ry="1.76" fill="#a8a8a8" /><ellipse cx="74.2" cy="177.4" rx="2" ry="1.6" fill="#a8a8a8" /><ellipse cx="86.2" cy="181.4" rx="2" ry="1.6" fill="#a8a8a8" /><ellipse cx="57.2" cy="190.4" rx="2" ry="1.6" fill="#a8a8a8" /><ellipse cx="70.2" cy="187.4" rx="2.5" ry="2" fill="#a8a8a8" /><ellipse cx="80.2" cy="192.4" rx="2" ry="1.6" fill="#a8a8a8" /><ellipse cx="88.2" cy="189.4" rx="2.3" ry="1.84" fill="#a8a8a8" /><ellipse cx="54.2" cy="182.4" rx="1.5" ry="1.2" fill="#a8a8a8" /><ellipse cx="58.2" cy="202.4" rx="2" ry="1.2" fill="#844a32" opacity="0.7"/><ellipse cx="70.2" cy="208.4" rx="2" ry="1.2" fill="#844a32" opacity="0.7"/><ellipse cx="82.2" cy="203.4" rx="2" ry="1.2" fill="#844a32" opacity="0.7"/><ellipse cx="88.2" cy="212.4" rx="2" ry="1.2" fill="#844a32" opacity="0.7"/><ellipse cx="63.2" cy="214.4" rx="2" ry="1.2" fill="#844a32" opacity="0.7"/><rect x="96.3" y="166" width="46" height="56.3" rx="2" fill="#7a7a7a" /><rect x="96.3" y="166" width="46" height="39.41" rx="2" fill="#d6d4cf" /><rect x="96.3" y="204.41" width="46" height="1" rx="0" fill="#9a9a98" /><rect x="143.7" y="166.4" width="46" height="56" rx="2" fill="#c2bebb" stroke="#9c9898" stroke-width="0.8"/><rect x="146.7" y="169.4" width="40" height="7" rx="0" fill="#c2b8b4" /><rect x="146.7" y="178.4" width="20" height="7" rx="0" fill="#b8bcb0" /><rect x="168.7" y="178.4" width="18" height="7" rx="0" fill="#bcc0b0" /><rect x="146.7" y="187.4" width="40" height="7" rx="0" fill="#bab8b2" /><rect x="146.7" y="196.4" width="18" height="8" rx="0" fill="#b0b8ac" /><rect x="165.7" y="196.4" width="21" height="8" rx="0" fill="#c0b6b2" /><rect x="146.7" y="206.4" width="12" height="8" rx="0" fill="#a0c0a0" /><rect x="159.7" y="206.4" width="27" height="8" rx="0" fill="#c6bab6" /><defs><linearGradient id="tl" x1="0" y1="0" x2="1" y2="0"><stop offset="0" stop-color="#b86a3a"/><stop offset="0.45" stop-color="#da9460"/><stop offset="1" stop-color="#c0723e"/></linearGradient></defs><rect x="191.3" y="166.9" width="46" height="55.4" rx="2" fill="#b8683a" /><rect x="192.1" y="167.7" width="14.13" height="18.5" rx="1" fill="url(#tl)" /><rect x="207.43" y="167.7" width="14.13" height="18.5" rx="1" fill="url(#tl)" /><rect x="222.77" y="167.7" width="14.13" height="18.5" rx="1" fill="url(#tl)" /><rect x="192.1" y="188.2" width="14.13" height="17.39" rx="1" fill="url(#tl)" /><rect x="207.43" y="188.2" width="14.13" height="17.39" rx="1" fill="url(#tl)" /><rect x="222.77" y="188.2" width="14.13" height="17.39" rx="1" fill="url(#tl)" /><rect x="192.1" y="207.59" width="14.13" height="13.51" rx="1" fill="url(#tl)" /><rect x="207.43" y="207.59" width="14.13" height="13.51" rx="1" fill="url(#tl)" /><rect x="222.77" y="207.59" width="14.13" height="13.51" rx="1" fill="url(#tl)" /><rect x="191.3" y="186" width="46" height="2.2" rx="0" fill="#7a4020" /><rect x="191.3" y="205.39" width="46" height="2.2" rx="0" fill="#7a4020" /><polygon points="238.9,168.2 284.9,185.5 284.9,222.3 238.9,222.3" fill="#c0bebc" stroke="#9a9a9a" stroke-width="0.8"/><polygon points="238.9,204.2 284.9,218.3 284.9,222.3 238.9,222.3" fill="#8a8aa8" /><rect x="241" y="176" width="6" height="10" rx="0" fill="#b0c4a8" /><rect x="241" y="188" width="6" height="12" rx="0" fill="#c8aeb0" opacity="0.6"/><line x1="253" y1="174" x2="253" y2="208" stroke="#d8d8d8" stroke-width="1.2"/><line x1="268" y1="180" x2="268" y2="213" stroke="#d8d8d8" stroke-width="1.2"/><rect x="1" y="211.1" width="46.4" height="65.8" rx="2" fill="#8c6c5c" /><rect x="1" y="211.1" width="46.4" height="26.98" rx="2" fill="#d6b282" /><rect x="1" y="238.08" width="46.4" height="2.5" rx="0" fill="#a88a68" /><rect x="4" y="215.1" width="14" height="6" rx="0" fill="#e2c49a" opacity="0.8"/><rect x="20" y="215.1" width="12" height="6" rx="0" fill="#e2c49a" opacity="0.8"/><rect x="34" y="215.1" width="11" height="6" rx="0" fill="#e2c49a" opacity="0.8"/><rect x="7" y="224.1" width="16" height="6" rx="0" fill="#e2c49a" opacity="0.8"/><rect x="25" y="224.1" width="16" height="6" rx="0" fill="#e2c49a" opacity="0.8"/><rect x="4" y="232.1" width="12" height="6" rx="0" fill="#e2c49a" opacity="0.8"/><rect x="18" y="232.1" width="14" height="6" rx="0" fill="#e2c49a" opacity="0.8"/><rect x="1" y="270.32" width="46.4" height="6.58" rx="1.5" fill="#8a7a5a" /><rect x="2" y="241.37" width="6" height="6" rx="0" fill="#c0a060" /><rect x="40.4" y="241.37" width="6" height="6" rx="0" fill="#c0a060" /><rect x="2" y="266.37" width="6" height="6" rx="0" fill="#c0a060" /><rect x="40.4" y="266.37" width="6" height="6" rx="0" fill="#c0a060" /><rect x="20.2" y="250.58" width="8" height="10" rx="2" fill="#d8bc70" /><ellipse cx="24.2" cy="257.16" rx="1.2" ry="1.7" fill="#2a2010" /><rect x="48.2" y="222.3" width="46.5" height="58.5" rx="2.5" fill="#3e9a52" /><rect x="48.2" y="222.3" width="46.5" height="39.78" rx="2.5" fill="#56c060" /><rect x="51.2" y="226.3" width="3" height="1" rx="0" fill="#7ad47a" opacity="0.8"/><rect x="56.7" y="235.3" width="3" height="1" rx="0" fill="#7ad47a" opacity="0.8"/><rect x="62.2" y="244.3" width="3" height="1" rx="0" fill="#7ad47a" opacity="0.8"/><rect x="67.7" y="226.3" width="3" height="1" rx="0" fill="#7ad47a" opacity="0.8"/><rect x="73.2" y="235.3" width="3" height="1" rx="0" fill="#7ad47a" opacity="0.8"/><rect x="78.7" y="244.3" width="3" height="1" rx="0" fill="#7ad47a" opacity="0.8"/><rect x="84.2" y="226.3" width="3" height="1" rx="0" fill="#7ad47a" opacity="0.8"/><rect x="89.7" y="235.3" width="3" height="1" rx="0" fill="#7ad47a" opacity="0.8"/><ellipse cx="53.2" cy="269.1" rx="1.8" ry="1" fill="#2e7a40" opacity="0.8"/><ellipse cx="60.2" cy="274.1" rx="1.8" ry="1" fill="#2e7a40" opacity="0.8"/><ellipse cx="67.2" cy="269.1" rx="1.8" ry="1" fill="#2e7a40" opacity="0.8"/><ellipse cx="74.2" cy="274.1" rx="1.8" ry="1" fill="#2e7a40" opacity="0.8"/><ellipse cx="81.2" cy="269.1" rx="1.8" ry="1" fill="#2e7a40" opacity="0.8"/><ellipse cx="88.2" cy="274.1" rx="1.8" ry="1" fill="#2e7a40" opacity="0.8"/><path d="M53.2,223.3 l2,-4 l1,4 l2,-3 l1,3 l2,-4 l1,4" stroke="#5a9a50" stroke-width="0.8" fill="none"/><defs><linearGradient id="rc" x1="0" y1="0" x2="0" y2="1"><stop offset="0" stop-color="#cf7e4c"/><stop offset="0.5" stop-color="#d88a58"/><stop offset="1" stop-color="#c47446"/></linearGradient></defs><path d="M96.3,224.6 Q100.3,223.6 106.3,227.6 Q126.3,236.6 142.3,237.8 V281 H96.3 Z" fill="url(#rc)" /><path d="M96.3,227.6 L102.3,224.6 L142.3,272.6 V281 H134.3 L96.3,234.6 Z" fill="#d6905e" stroke="#955530" stroke-width="0.8"/><rect x="96.3" y="245.6" width="46" height="1.2" rx="0" fill="#8a4a2a" opacity="0.7"/><rect x="96.3" y="264.6" width="46" height="1.2" rx="0" fill="#8a4a2a" opacity="0.7"/><line x1="106.3" y1="242.6" x2="113.3" y2="235.6" stroke="#8a4a2a" stroke-width="0.9" opacity="0.8"/><line x1="116.3" y1="254.6" x2="123.3" y2="247.6" stroke="#8a4a2a" stroke-width="0.9" opacity="0.8"/><line x1="126.3" y1="266.6" x2="133.3" y2="259.6" stroke="#8a4a2a" stroke-width="0.9" opacity="0.8"/><path d="M189.7,224.6 Q185.7,223.6 179.7,227.6 Q159.7,236.6 143.7,237.8 V281 H189.7 Z" fill="url(#rc)" /><path d="M189.7,227.6 L183.7,224.6 L143.7,272.6 V281 H151.7 L189.7,234.6 Z" fill="#d6905e" stroke="#955530" stroke-width="0.8"/><rect x="143.7" y="245.6" width="46" height="1.2" rx="0" fill="#8a4a2a" opacity="0.7"/><rect x="143.7" y="264.6" width="46" height="1.2" rx="0" fill="#8a4a2a" opacity="0.7"/><line x1="172.7" y1="235.6" x2="179.7" y2="242.6" stroke="#8a4a2a" stroke-width="0.9" opacity="0.8"/><line x1="162.7" y1="247.6" x2="169.7" y2="254.6" stroke="#8a4a2a" stroke-width="0.9" opacity="0.8"/><line x1="152.7" y1="259.6" x2="159.7" y2="266.6" stroke="#8a4a2a" stroke-width="0.9" opacity="0.8"/><rect x="191.3" y="224.9" width="46" height="56" rx="2" fill="#9e7056" /><rect x="191.3" y="224.9" width="46" height="37.52" rx="2" fill="#c2845e" /><rect x="191.3" y="259.62" width="46" height="2.8" rx="0" fill="#b07a5a" /><rect x="238" y="224.9" width="47" height="56" rx="2" fill="#b8703e" /><rect x="240" y="226.9" width="43" height="33.6" rx="0" fill="#cc8a5c" /><rect x="240" y="233.62" width="43" height="0.8" rx="0" fill="#a86a40" opacity="0.7"/><rect x="240" y="240.34" width="43" height="0.8" rx="0" fill="#a86a40" opacity="0.7"/><rect x="240" y="247.06" width="43" height="0.8" rx="0" fill="#a86a40" opacity="0.7"/><rect x="240" y="253.78" width="43" height="0.8" rx="0" fill="#a86a40" opacity="0.7"/><rect x="243" y="224.9" width="3.5" height="34.72" rx="0" fill="#d8b868" /><rect x="276.5" y="224.9" width="3.5" height="34.72" rx="0" fill="#d8b868" /><rect x="238" y="258.5" width="47" height="3" rx="0" fill="#d8b868" /><rect x="239" y="264.1" width="6" height="6" rx="0" fill="#c8a868" /><rect x="278" y="264.1" width="6" height="6" rx="0" fill="#c8a868" /><rect x="239" y="274.18" width="6" height="6" rx="0" fill="#c8a868" /><rect x="278" y="274.18" width="6" height="6" rx="0" fill="#c8a868" /><rect x="256.5" y="262.98" width="10" height="10" rx="2" fill="#d4b466" /><ellipse cx="261.5" cy="268.58" rx="1.3" ry="1.8" fill="#2a2010" /></svg></div>

<div class="abs" style="left:17px;top:412px;font-size:7.5px;line-height:9px;color:#4a4a4a;letter-spacing:-0.1px;-webkit-text-stroke:0.1px #4a4a4a">Options</div>

<div id="options" class="abs"></div>
<div class="cb" style="left:22.5px;top:428.5px"></div><svg class="abs" style="left:22px;top:425px" width="12" height="12"><path d="M2,6 L5,9.5 L10.5,1.5" stroke="#1a2a50" stroke-width="1.8" fill="none"/></svg>
<div class="cbl" style="left:34px;top:428px">Even Frames</div>
<div class="cb" style="left:78px;top:428.5px"></div><svg class="abs" style="left:77.5px;top:425px" width="12" height="12"><path d="M2,6 L5,9.5 L10.5,1.5" stroke="#1a2a50" stroke-width="1.8" fill="none"/></svg>
<div class="cbl" style="left:89.5px;top:428px">Rotate</div>
<div class="cb" style="left:22.5px;top:441px"></div><svg class="abs" style="left:22px;top:437.5px" width="12" height="12"><path d="M2,6 L5,9.5 L10.5,1.5" stroke="#1a2a50" stroke-width="1.8" fill="none"/></svg>
<div class="cbl" style="left:34px;top:440.5px">Crop</div>
<div class="cbl" style="left:22px;top:454px">Crop Alpha</div>
<div class="cbl" style="left:77.5px;top:454px">Spacing</div>
<div class="field" style="left:22.5px;top:464.5px;width:25px">0</div>
<div class="step" style="left:49px;top:465px"></div>
<div class="field" style="left:77.5px;top:464.5px;width:25px">1</div>
<div class="step" style="left:103.7px;top:465px"></div>
<svg class="abs" style="left:49px;top:465px" width="8" height="13"><path d="M2.5,4.5 L4,2.5 L5.5,4.5 Z M2.5,8.5 L4,10.5 L5.5,8.5 Z" fill="#333"/></svg>
<svg class="abs" style="left:103.7px;top:465px" width="8" height="13"><path d="M2.5,4.5 L4,2.5 L5.5,4.5 Z M2.5,8.5 L4,10.5 L5.5,8.5 Z" fill="#333"/></svg>


<div class="abs" style="left:727px;top:486px;font-size:6.2px;line-height:8px;color:#222;-webkit-text-stroke:0.25px #222">33 Sprites (482 x 452)</div>

</div></body></html>
